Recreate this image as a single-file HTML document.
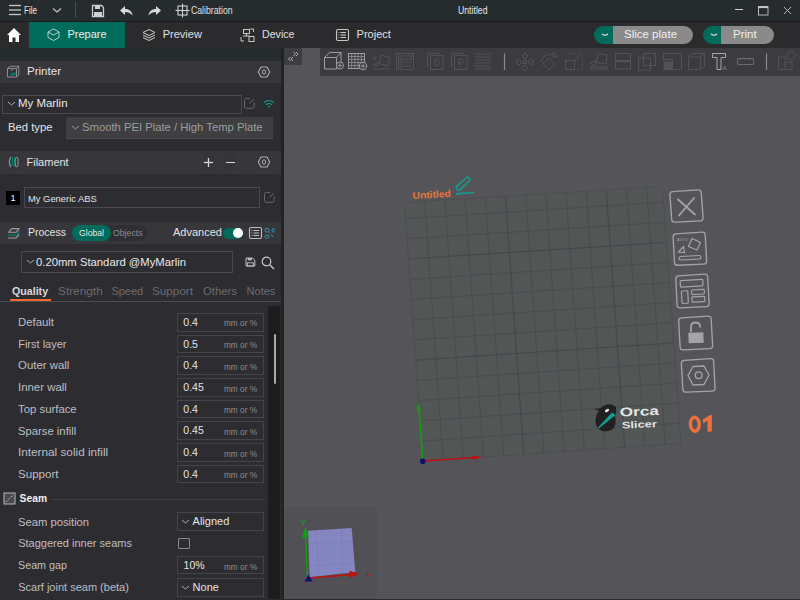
<!DOCTYPE html>
<html><head><meta charset="utf-8"><style>
html,body{margin:0;padding:0;}
body{width:800px;height:600px;overflow:hidden;background:#2d2c31;position:relative;font-family:"Liberation Sans",sans-serif;}
div,svg{position:absolute;}
.t{white-space:nowrap;}
</style></head><body>
<div style="left:0px;top:0px;width:800px;height:21px;background:#262b2d;"></div>
<div style="left:0px;top:21px;width:800px;height:1px;background:#1a1c1e;"></div>
<svg style="left:8px;top:3px;" width="14" height="14" viewBox="0 0 14 14"><g stroke="#c8c8c8" stroke-width="1.3"><line x1="1" y1="2.5" x2="13" y2="2.5"/><line x1="1" y1="7" x2="13" y2="7"/><line x1="1" y1="11.5" x2="13" y2="11.5"/></g></svg>
<div class="t" style="left:24.00px;top:5.54px;font-size:10px;line-height:10px;color:#e8e8e8;transform:scaleX(0.807);transform-origin:0 0;">File</div>
<svg style="left:52px;top:6px;" width="10" height="8" viewBox="0 0 10 8"><polyline points="1,2.5 5,6 9,2.5" fill="none" stroke="#c8c8c8" stroke-width="1.1"/></svg>
<div style="left:75px;top:2px;width:1px;height:16px;background:#4a4e50;"></div>
<svg style="left:91px;top:4px;" width="14" height="14" viewBox="0 0 14 14"><path d="M1.5 1.5h9l2 2v9h-11z" fill="none" stroke="#d0d0d0" stroke-width="1.3"/><rect x="4" y="1.5" width="5" height="3.5" fill="#d0d0d0"/><rect x="3" y="8" width="8" height="4.5" fill="#d0d0d0"/></svg>
<svg style="left:119px;top:5px;" width="15" height="12" viewBox="0 0 15 12"><path d="M6 1 L1 5.5 L6 10 V7 C9 7 11.5 8 13.5 10.5 C13 6.5 10.5 4 6 4 Z" fill="#d8d8d8"/></svg>
<svg style="left:147px;top:5px;" width="15" height="12" viewBox="0 0 15 12"><path d="M9 1 L14 5.5 L9 10 V7 C6 7 3.5 8 1.5 10.5 C2 6.5 4.5 4 9 4 Z" fill="#d8d8d8"/></svg>
<svg style="left:175px;top:3px;" width="15" height="15" viewBox="0 0 15 15"><g fill="none" stroke="#d0d0d0" stroke-width="1.1"><rect x="3" y="3" width="9" height="9"/><line x1="7.5" y1="0.5" x2="7.5" y2="14.5"/><line x1="0.5" y1="7.5" x2="14.5" y2="7.5"/></g></svg>
<div class="t" style="left:191.00px;top:5.54px;font-size:10px;line-height:10px;color:#e0e0e0;transform:scaleX(0.870);transform-origin:0 0;">Calibration</div>
<div class="t" style="left:457.50px;top:5.54px;font-size:10px;line-height:10px;color:#e8e8e8;transform:scaleX(0.870);transform-origin:0 0;">Untitled</div>
<div style="left:735px;top:9px;width:8px;height:1px;background:#d0d0d0;"></div>
<svg style="left:757px;top:5px;" width="12" height="11" viewBox="0 0 12 11"><rect x="1.5" y="1.5" width="9.5" height="8.5" fill="none" stroke="#c8c8c8" stroke-width="0.9"/><rect x="1.5" y="1.5" width="9.5" height="1.6" fill="#c8c8c8"/></svg>
<svg style="left:783px;top:6px;" width="10" height="10" viewBox="0 0 10 10"><g stroke="#c8c8c8" stroke-width="0.9"><line x1="1" y1="1" x2="8" y2="8"/><line x1="8" y1="1" x2="1" y2="8"/></g></svg>
<div style="left:0px;top:22px;width:800px;height:26px;background:#2b2b2e;"></div>
<div style="left:29px;top:22px;width:95.7px;height:26px;background:#006b5a;"></div>
<svg style="left:6px;top:27px;" width="16" height="16" viewBox="0 0 16 16"><path d="M8 1 L15 8 H13 V15 H9.5 V10.5 H6.5 V15 H3 V8 H1 Z" fill="#ffffff"/></svg>
<svg style="left:47px;top:28px;" width="13" height="13" viewBox="0 0 13 13"><g fill="none" stroke="#c8dcd8" stroke-width="0.9"><path d="M6.5 1 L12 4 V9.5 L6.5 12.5 L1 9.5 V4 Z"/><path d="M1 4 L6.5 7 L12 4"/></g></svg>
<div class="t" style="left:67.50px;top:29.49px;font-size:11px;line-height:11px;color:#e8f0ee;">Prepare</div>
<svg style="left:142px;top:28px;" width="14" height="14" viewBox="0 0 14 14"><g fill="none" stroke="#d0d0d0" stroke-width="1"><path d="M7 1.5 L13 4.5 L7 7.5 L1 4.5 Z"/><path d="M1 7 L7 10 L13 7"/><path d="M1 9.5 L7 12.5 L13 9.5"/></g></svg>
<div class="t" style="left:162.75px;top:28.99px;font-size:11px;line-height:11px;color:#e0e0e0;">Preview</div>
<svg style="left:240px;top:28px;" width="15" height="14" viewBox="0 0 15 14"><g fill="none" stroke="#c8c8c8" stroke-width="1"><rect x="3.5" y="1.5" width="6" height="4"/><line x1="6.5" y1="5.5" x2="6.5" y2="8"/><line x1="3" y1="8" x2="10" y2="8"/><path d="M1 9 V13 H4"/><path d="M10 1 H13.5 V4"/><rect x="9" y="8.5" width="5" height="5"/></g></svg>
<div class="t" style="left:262.00px;top:28.99px;font-size:11px;line-height:11px;color:#e0e0e0;transform:scaleX(0.967);transform-origin:0 0;">Device</div>
<svg style="left:335px;top:28px;" width="15" height="14" viewBox="0 0 15 14"><g fill="none" stroke="#c8c8c8" stroke-width="1.1"><rect x="1.5" y="1.5" width="12" height="11" rx="1.5"/><line x1="5.5" y1="4.5" x2="11" y2="4.5"/><line x1="5.5" y1="7" x2="11" y2="7"/><line x1="5.5" y1="9.5" x2="11" y2="9.5"/><line x1="3.5" y1="4.5" x2="4.3" y2="4.5"/><line x1="3.5" y1="7" x2="4.3" y2="7"/><line x1="3.5" y1="9.5" x2="4.3" y2="9.5"/></g></svg>
<div class="t" style="left:356.60px;top:28.99px;font-size:11px;line-height:11px;color:#e0e0e0;">Project</div>
<div style="left:594px;top:26px;width:30px;height:17.5px;background:#006b5a;border-radius:9px 0 0 9px;"></div>
<div style="left:612.5px;top:26px;width:80px;height:17.5px;background:#8a8a8a;border-radius:0 9px 9px 0;"></div>
<svg style="left:599px;top:31px;" width="12" height="8" viewBox="0 0 12 8"><path d="M3 3 Q6 5.5 9 3" fill="none" stroke="#e0e0e0" stroke-width="1.1"/></svg>
<div class="t" style="left:624.00px;top:28.57px;font-size:11.5px;line-height:11.5px;color:#f0f0f0;">Slice plate</div>
<div style="left:703px;top:26px;width:30px;height:17.5px;background:#006b5a;border-radius:9px 0 0 9px;"></div>
<div style="left:721px;top:26px;width:53px;height:17.5px;background:#8a8a8a;border-radius:0 9px 9px 0;"></div>
<svg style="left:708px;top:31px;" width="12" height="8" viewBox="0 0 12 8"><path d="M3 3 Q6 5.5 9 3" fill="none" stroke="#e0e0e0" stroke-width="1.1"/></svg>
<div class="t" style="left:733.00px;top:28.57px;font-size:11.5px;line-height:11.5px;color:#f0f0f0;">Print</div>
<div style="left:0px;top:47.5px;width:800px;height:1px;background:#232325;"></div>
<div style="left:0px;top:48px;width:281px;height:552px;background:#2d2c31;"></div>
<div style="left:0px;top:48px;width:281px;height:13px;background:#262b2d;"></div>
<div style="left:280.5px;top:48px;width:3.5px;height:552px;background:#1f2425;"></div>
<div style="left:0px;top:61px;width:281px;height:22px;background:#36363b;"></div>
<svg style="left:4px;top:62px;" width="20" height="20" viewBox="0 0 20 20"><rect x="3.3" y="2" width="12" height="16" fill="#34353b"/><g fill="none" stroke="#8e8e92" stroke-width="1" stroke-linejoin="round"><path d="M3.5 6.5 H12.5 V15 H3.5 Z"/><path d="M3.5 6.5 L5.8 4.3 H14.8 V13 L12.5 15"/><path d="M12.5 6.5 L14.8 4.3"/><path d="M8 6.5 V9"/></g><path d="M5.2 13.2 Q8 10.3 11.5 10.2 V13.2 Z" fill="#00806a"/></svg>
<div class="t" style="left:26.50px;top:65.99px;font-size:11px;line-height:11px;color:#e4e4e4;transform:scaleX(1.049);transform-origin:0 0;">Printer</div>
<div style="left:258.5px;top:64px;width:11px;height:15.5px;background:#34353b;"></div>
<svg style="left:256px;top:63.7px;" width="16" height="16" viewBox="0 0 16 16"><path d="M2.3 8 L5 3 H11 L13.7 8 L11 13 H5 Z" fill="none" stroke="#b0b0b0" stroke-width="1.1" stroke-linejoin="round"/><ellipse cx="8" cy="8" rx="1.7" ry="2.2" fill="none" stroke="#b0b0b0" stroke-width="1"/></svg>
<div style="left:2px;top:95px;width:239.5px;height:18.5px;border:1px solid #48484e;box-sizing:border-box;"></div>
<svg style="left:7px;top:100px;" width="9" height="7" viewBox="0 0 9 7"><polyline points="1,2 4.5,5 8,2" fill="none" stroke="#b0b0b0" stroke-width="1"/></svg>
<div class="t" style="left:17.50px;top:98.39px;font-size:11px;line-height:11px;color:#e8e8e8;transform:scaleX(1.038);transform-origin:0 0;">My Marlin</div>
<svg style="left:243px;top:96px;" width="14" height="14" viewBox="0 0 14 14"><path d="M11.2 6.5 V10.5 Q11.2 12.3 9.4 12.3 H3.3 Q1.5 12.3 1.5 10.5 V4.3 Q1.5 2.5 3.3 2.5 H7" fill="none" stroke="#67676b" stroke-width="1"/><line x1="6.5" y1="7.3" x2="11" y2="3" stroke="#67676b" stroke-width="1"/></svg>
<svg style="left:263px;top:98px;" width="12" height="10" viewBox="0 0 12 10"><g fill="none" stroke="#0e9c87" stroke-width="1.1" stroke-linecap="round"><path d="M1.2 4.3 Q5.8 0.6 10.5 4.3"/><path d="M3.2 6.5 Q5.8 4.4 8.5 6.5"/></g><circle cx="5.8" cy="8.6" r="0.9" fill="#0e9c87"/></svg>
<div class="t" style="left:7.50px;top:121.69px;font-size:11px;line-height:11px;color:#e4e4e4;transform:scaleX(1.025);transform-origin:0 0;">Bed type</div>
<div style="left:66.3px;top:117.2px;width:207.2px;height:21.5px;background:#3f3f41;"></div>
<div style="left:66.3px;top:137.7px;width:207.2px;height:1px;background:#4b4b50;"></div>
<svg style="left:71px;top:124px;" width="10" height="7" viewBox="0 0 10 7"><polyline points="1,2 4.5,5 8,2" fill="none" stroke="#9a9a9a" stroke-width="1"/></svg>
<div class="t" style="left:81.50px;top:121.69px;font-size:11px;line-height:11px;color:#9c9ca0;transform:scaleX(1.023);transform-origin:0 0;">Smooth PEI Plate / High Temp Plate</div>
<div style="left:0px;top:151px;width:281px;height:23px;background:#36363b;"></div>
<svg style="left:4px;top:152px;" width="20" height="20" viewBox="0 0 20 20"><rect x="3.3" y="2" width="11.7" height="16" fill="#34353b"/><g fill="none" stroke-linecap="round"><path d="M6.6 5.2 Q4.2 10 6.6 14.8" stroke="#8e8e92" stroke-width="1.3"/><line x1="8.4" y1="5.5" x2="8.4" y2="13.4" stroke="#00806a" stroke-width="1.1"/><line x1="10.4" y1="5.5" x2="10.4" y2="13.4" stroke="#00806a" stroke-width="1.1"/><ellipse cx="12.6" cy="10" rx="1.5" ry="4.7" stroke="#8e8e92" stroke-width="1.1"/></g></svg>
<div class="t" style="left:26.50px;top:156.69px;font-size:11px;line-height:11px;color:#e4e4e4;">Filament</div>
<div style="left:203px;top:152px;width:11px;height:19px;background:#34353b;"></div>
<div style="left:225.4px;top:152px;width:11px;height:19px;background:#34353b;"></div>
<svg style="left:203px;top:157px;" width="11" height="11" viewBox="0 0 11 11"><g stroke="#d8d8d8" stroke-width="1.3"><line x1="5.5" y1="1" x2="5.5" y2="10"/><line x1="1" y1="5.5" x2="10" y2="5.5"/></g></svg>
<div style="left:226px;top:161.5px;width:9px;height:1.3px;background:#d8d8d8;"></div>
<div style="left:258.5px;top:154.5px;width:11px;height:15.5px;background:#34353b;"></div>
<svg style="left:256px;top:154.2px;" width="16" height="16" viewBox="0 0 16 16"><path d="M2.3 8 L5 3 H11 L13.7 8 L11 13 H5 Z" fill="none" stroke="#b0b0b0" stroke-width="1.1" stroke-linejoin="round"/><ellipse cx="8" cy="8" rx="1.7" ry="2.2" fill="none" stroke="#b0b0b0" stroke-width="1"/></svg>
<div style="left:6px;top:191px;width:14px;height:14px;background:#000000;"></div>
<div class="t" style="left:10.50px;top:194.38px;font-size:9px;line-height:9px;color:#ffffff;">1</div>
<div style="left:24px;top:187.3px;width:236.3px;height:21.2px;border:1px solid #48484e;box-sizing:border-box;"></div>
<div class="t" style="left:27.80px;top:193.79px;font-size:9.7px;line-height:9.7px;color:#e4e4e4;transform:scaleX(0.967);transform-origin:0 0;">My Generic ABS</div>
<svg style="left:262.5px;top:190px;" width="14" height="14" viewBox="0 0 14 14"><path d="M11.2 6.5 V10.5 Q11.2 12.3 9.4 12.3 H3.3 Q1.5 12.3 1.5 10.5 V4.3 Q1.5 2.5 3.3 2.5 H7" fill="none" stroke="#67676b" stroke-width="1"/><line x1="6.5" y1="7.3" x2="11" y2="3" stroke="#67676b" stroke-width="1"/></svg>
<div style="left:0px;top:221.6px;width:281px;height:22.6px;background:#36363b;"></div>
<svg style="left:4px;top:224px;" width="20" height="18" viewBox="0 0 20 18"><g fill="none" stroke-linejoin="round" stroke-linecap="round"><path d="M4.6 8.3 L7.8 4.6 H15 L12.2 8.3 Z" stroke="#a0a0a2" stroke-width="1.1"/><path d="M4.6 11.2 H12.6 L15.4 7.6" stroke="#00806a" stroke-width="1.3"/><path d="M4.6 14 H12 L15 10.8" stroke="#a0a0a2" stroke-width="1.1"/></g></svg>
<div class="t" style="left:27.50px;top:226.99px;font-size:11px;line-height:11px;color:#e4e4e4;transform:scaleX(0.956);transform-origin:0 0;">Process</div>
<div style="left:72px;top:225px;width:75px;height:15.6px;background:#2f2f33;border-radius:8px;"></div>
<div style="left:72px;top:225px;width:38.5px;height:15.6px;background:#006b5a;border-radius:8px;"></div>
<div class="t" style="left:79.00px;top:228.78px;font-size:9px;line-height:9px;color:#e8e8e8;transform:scaleX(0.961);transform-origin:0 0;">Global</div>
<div class="t" style="left:112.50px;top:228.78px;font-size:9px;line-height:9px;color:#8a8a8e;transform:scaleX(0.967);transform-origin:0 0;">Objects</div>
<div class="t" style="left:173.00px;top:227.29px;font-size:11px;line-height:11px;color:#e4e4e4;">Advanced</div>
<div style="left:223.4px;top:227.7px;width:19.6px;height:11.3px;background:#006b5a;border-radius:6px;"></div>
<div style="left:232.5px;top:228.2px;width:10.3px;height:10.3px;background:#ffffff;border-radius:50%;"></div>
<svg style="left:248px;top:226px;" width="15" height="14" viewBox="0 0 15 14"><rect x="1.5" y="1.5" width="12" height="11" rx="1.5" fill="none" stroke="#c0c0c0" stroke-width="1.1"/><g stroke="#c0c0c0" stroke-width="1"><line x1="5.5" y1="4.5" x2="11" y2="4.5"/><line x1="5.5" y1="7" x2="11" y2="7"/><line x1="5.5" y1="9.5" x2="11" y2="9.5"/><line x1="3.5" y1="4.5" x2="4.3" y2="4.5"/><line x1="3.5" y1="7" x2="4.3" y2="7"/><line x1="3.5" y1="9.5" x2="4.3" y2="9.5"/></g></svg>
<div style="left:264px;top:225px;width:11.5px;height:16px;background:#34363c;"></div>
<svg style="left:263px;top:226px;" width="13" height="14" viewBox="0 0 13 14"><g fill="none" stroke="#3d8fa8" stroke-width="1"><ellipse cx="4" cy="4.2" rx="2.2" ry="1.9"/><ellipse cx="4" cy="10.6" rx="2.2" ry="1.5"/><line x1="5.8" y1="5.8" x2="7" y2="7"/><line x1="8" y1="8.2" x2="10" y2="11"/><ellipse cx="10.2" cy="4.3" rx="1.2" ry="1.8"/></g></svg>
<div style="left:21px;top:251.2px;width:212px;height:21.5px;border:1px solid #48484e;box-sizing:border-box;"></div>
<svg style="left:26px;top:258px;" width="10" height="7" viewBox="0 0 10 7"><polyline points="1,2 4.5,5 8,2" fill="none" stroke="#b0b0b0" stroke-width="1"/></svg>
<div class="t" style="left:36.00px;top:256.69px;font-size:11px;line-height:11px;color:#e8e8e8;transform:scaleX(1.026);transform-origin:0 0;">0.20mm Standard @MyMarlin</div>
<svg style="left:245px;top:257px;" width="11" height="10" viewBox="0 0 11 10"><path d="M1 1 H7.5 L9.8 3.3 V9 H1 Z" fill="none" stroke="#c0c0c0" stroke-width="1"/><rect x="2.8" y="1" width="4" height="2.3" fill="#c0c0c0"/><rect x="2.5" y="5.8" width="5.8" height="3.2" fill="none" stroke="#c0c0c0" stroke-width="0.9"/></svg>
<svg style="left:261px;top:256px;" width="14" height="14" viewBox="0 0 14 14"><circle cx="5.5" cy="5.5" r="4.3" fill="none" stroke="#c8c8c8" stroke-width="1.2"/><line x1="8.7" y1="8.7" x2="13" y2="13" stroke="#c8c8c8" stroke-width="1.3"/></svg>
<div class="t" style="left:11.90px;top:285.94px;font-size:10.7px;line-height:10.7px;color:#d8d8dc;font-weight:bold;">Quality</div>
<div style="left:9.6px;top:299px;width:41.4px;height:2px;background:#f2692f;"></div>
<div class="t" style="left:57.80px;top:285.69px;font-size:11px;line-height:11px;color:#6c6c70;transform:scaleX(1.075);transform-origin:0 0;">Strength</div>
<div class="t" style="left:111.40px;top:285.69px;font-size:11px;line-height:11px;color:#6c6c70;">Speed</div>
<div class="t" style="left:151.60px;top:285.69px;font-size:11px;line-height:11px;color:#6c6c70;transform:scaleX(1.062);transform-origin:0 0;">Support</div>
<div class="t" style="left:202.80px;top:285.69px;font-size:11px;line-height:11px;color:#6c6c70;transform:scaleX(1.024);transform-origin:0 0;">Others</div>
<div class="t" style="left:246.60px;top:285.69px;font-size:11px;line-height:11px;color:#6c6c70;">Notes</div>
<div style="left:0px;top:301px;width:280.5px;height:1px;background:#4c4c52;"></div>
<div style="left:268.2px;top:306px;width:12.3px;height:294px;background:#1c1d1c;"></div>
<div style="left:273.8px;top:333.5px;width:2.3px;height:50.5px;background:#a8a8a8;border-radius:1px;"></div>
<div class="t" style="left:18.20px;top:317.09px;font-size:11px;line-height:11px;color:#bebec2;transform:scaleX(1.033);transform-origin:0 0;">Default</div>
<div style="left:177.3px;top:312.8px;width:86.7px;height:18.8px;border:1px solid #444449;box-sizing:border-box;"></div>
<div class="t" style="left:183.30px;top:316.91px;font-size:10.5px;line-height:10.5px;color:#e4e4e6;">0.4</div>
<div class="t" style="left:223.90px;top:319.47px;font-size:8.3px;line-height:8.3px;color:#8c8c90;">mm or %</div>
<div class="t" style="left:18.20px;top:338.79px;font-size:11px;line-height:11px;color:#bebec2;">First layer</div>
<div style="left:177.3px;top:334.5px;width:86.7px;height:18.8px;border:1px solid #444449;box-sizing:border-box;"></div>
<div class="t" style="left:183.30px;top:338.61px;font-size:10.5px;line-height:10.5px;color:#e4e4e6;">0.5</div>
<div class="t" style="left:223.90px;top:341.17px;font-size:8.3px;line-height:8.3px;color:#8c8c90;">mm or %</div>
<div class="t" style="left:18.20px;top:360.49px;font-size:11px;line-height:11px;color:#bebec2;transform:scaleX(1.038);transform-origin:0 0;">Outer wall</div>
<div style="left:177.3px;top:356.2px;width:86.7px;height:18.8px;border:1px solid #444449;box-sizing:border-box;"></div>
<div class="t" style="left:183.30px;top:360.31px;font-size:10.5px;line-height:10.5px;color:#e4e4e6;">0.4</div>
<div class="t" style="left:223.90px;top:362.87px;font-size:8.3px;line-height:8.3px;color:#8c8c90;">mm or %</div>
<div class="t" style="left:18.20px;top:382.19px;font-size:11px;line-height:11px;color:#bebec2;transform:scaleX(1.037);transform-origin:0 0;">Inner wall</div>
<div style="left:177.3px;top:377.9px;width:86.7px;height:18.8px;border:1px solid #444449;box-sizing:border-box;"></div>
<div class="t" style="left:183.30px;top:382.01px;font-size:10.5px;line-height:10.5px;color:#e4e4e6;">0.45</div>
<div class="t" style="left:223.90px;top:384.57px;font-size:8.3px;line-height:8.3px;color:#8c8c90;">mm or %</div>
<div class="t" style="left:18.20px;top:403.89px;font-size:11px;line-height:11px;color:#bebec2;transform:scaleX(1.032);transform-origin:0 0;">Top surface</div>
<div style="left:177.3px;top:399.6px;width:86.7px;height:18.8px;border:1px solid #444449;box-sizing:border-box;"></div>
<div class="t" style="left:183.30px;top:403.71px;font-size:10.5px;line-height:10.5px;color:#e4e4e6;">0.4</div>
<div class="t" style="left:223.90px;top:406.27px;font-size:8.3px;line-height:8.3px;color:#8c8c90;">mm or %</div>
<div class="t" style="left:18.20px;top:425.59px;font-size:11px;line-height:11px;color:#bebec2;transform:scaleX(1.025);transform-origin:0 0;">Sparse infill</div>
<div style="left:177.3px;top:421.3px;width:86.7px;height:18.8px;border:1px solid #444449;box-sizing:border-box;"></div>
<div class="t" style="left:183.30px;top:425.41px;font-size:10.5px;line-height:10.5px;color:#e4e4e6;">0.45</div>
<div class="t" style="left:223.90px;top:427.97px;font-size:8.3px;line-height:8.3px;color:#8c8c90;">mm or %</div>
<div class="t" style="left:18.20px;top:447.29px;font-size:11px;line-height:11px;color:#bebec2;transform:scaleX(1.069);transform-origin:0 0;">Internal solid infill</div>
<div style="left:177.3px;top:443.0px;width:86.7px;height:18.8px;border:1px solid #444449;box-sizing:border-box;"></div>
<div class="t" style="left:183.30px;top:447.11px;font-size:10.5px;line-height:10.5px;color:#e4e4e6;">0.4</div>
<div class="t" style="left:223.90px;top:449.67px;font-size:8.3px;line-height:8.3px;color:#8c8c90;">mm or %</div>
<div class="t" style="left:18.20px;top:468.99px;font-size:11px;line-height:11px;color:#bebec2;transform:scaleX(1.051);transform-origin:0 0;">Support</div>
<div style="left:177.3px;top:464.70000000000005px;width:86.7px;height:18.8px;border:1px solid #444449;box-sizing:border-box;"></div>
<div class="t" style="left:183.30px;top:468.81px;font-size:10.5px;line-height:10.5px;color:#e4e4e6;">0.4</div>
<div class="t" style="left:223.90px;top:471.37px;font-size:8.3px;line-height:8.3px;color:#8c8c90;">mm or %</div>
<svg style="left:3px;top:492px;" width="13" height="13" viewBox="0 0 13 13"><rect x="1" y="1" width="11" height="11" fill="#4a4a4e" stroke="#b8b8b8" stroke-width="1"/><path d="M3 10 L10 3" stroke="#d0d0d0" stroke-width="1" stroke-dasharray="1.2 1.2"/></svg>
<div class="t" style="left:19.60px;top:493.68px;font-size:10.3px;line-height:10.3px;color:#f0f0f0;font-weight:bold;">Seam</div>
<div style="left:50.8px;top:498.8px;width:214px;height:1px;background:#3e3e43;"></div>
<div class="t" style="left:18.20px;top:516.69px;font-size:11px;line-height:11px;color:#bebec2;transform:scaleX(1.020);transform-origin:0 0;">Seam position</div>
<div class="t" style="left:18.20px;top:538.39px;font-size:11px;line-height:11px;color:#bebec2;">Staggered inner seams</div>
<div class="t" style="left:18.20px;top:560.09px;font-size:11px;line-height:11px;color:#bebec2;transform:scaleX(0.977);transform-origin:0 0;">Seam gap</div>
<div class="t" style="left:18.20px;top:581.79px;font-size:11px;line-height:11px;color:#bebec2;">Scarf joint seam (beta)</div>
<div style="left:177.4px;top:512px;width:86.2px;height:18.6px;border:1px solid #444449;box-sizing:border-box;"></div>
<svg style="left:181px;top:518px;" width="10" height="7" viewBox="0 0 10 7"><polyline points="1,2 4.5,5 8,2" fill="none" stroke="#b0b0b0" stroke-width="1"/></svg>
<div class="t" style="left:192.60px;top:516.29px;font-size:11px;line-height:11px;color:#e4e4e6;">Aligned</div>
<div style="left:178px;top:538px;width:11.6px;height:11.4px;border:1px solid #8a8a8e;box-sizing:border-box;border-radius:1px;"></div>
<div style="left:177.4px;top:556px;width:86.2px;height:18.4px;border:1px solid #444449;box-sizing:border-box;"></div>
<div class="t" style="left:183.60px;top:560.11px;font-size:10.5px;line-height:10.5px;color:#e4e4e6;">10%</div>
<div class="t" style="left:223.90px;top:562.67px;font-size:8.3px;line-height:8.3px;color:#8c8c90;">mm or %</div>
<div style="left:177.4px;top:577.6px;width:86.2px;height:19px;border:1px solid #444449;box-sizing:border-box;"></div>
<svg style="left:181px;top:584px;" width="10" height="7" viewBox="0 0 10 7"><polyline points="1,2 4.5,5 8,2" fill="none" stroke="#b0b0b0" stroke-width="1"/></svg>
<div class="t" style="left:192.60px;top:581.69px;font-size:11px;line-height:11px;color:#e4e4e6;">None</div>
<div style="left:284px;top:48px;width:516px;height:552px;background:#555459;"></div>
<div style="left:284px;top:48px;width:18px;height:17px;background:#3d3d42;"></div>
<svg style="left:286px;top:50px;" width="14" height="12" viewBox="0 0 14 12"><g fill="none" stroke="#b8b8b8" stroke-width="0.9"><path d="M4.5 7 L2.5 9 L4.5 11"/><path d="M7 7 L5 9 L7 11"/><path d="M7.5 2 L9.5 4 L7.5 6"/><path d="M10 2 L12 4 L10 6"/></g></svg>
<div style="left:320.2px;top:47.7px;width:479.8px;height:28px;background:#3b3b40;"></div>
<div style="left:0px;top:598.5px;width:800px;height:1.5px;background:#2a2a2d;"></div>
<svg style="left:0;top:0" width="800" height="600" viewBox="0 0 800 600"><defs><clipPath id="pc"><path d="M422.8,461.3 L405.2,211.6 Q404.6,202.6 413.6,202.0 L653.5,186.9 Q662.5,186.3 663.1,195.2 L681.0,443.3 Z"/></clipPath></defs><path d="M422.8,461.3 L405.2,211.6 Q404.6,202.6 413.6,202.0 L653.5,186.9 Q662.5,186.3 663.1,195.2 L681.0,443.3 Z" fill="#525654"/><g clip-path="url(#pc)"><line x1="443.0" y1="459.9" x2="424.8" y2="201.3" stroke="#4c4a54" stroke-width="1.0"/><line x1="421.4" y1="441.1" x2="679.6" y2="423.2" stroke="#4c4a54" stroke-width="1.0"/><line x1="463.2" y1="458.5" x2="444.9" y2="200.1" stroke="#4c4a54" stroke-width="1.0"/><line x1="420.0" y1="420.8" x2="678.1" y2="403.1" stroke="#4c4a54" stroke-width="1.0"/><line x1="483.4" y1="457.1" x2="465.1" y2="198.8" stroke="#4c4a54" stroke-width="1.0"/><line x1="418.5" y1="400.6" x2="676.7" y2="383.0" stroke="#4c4a54" stroke-width="1.0"/><line x1="503.6" y1="455.7" x2="485.3" y2="197.5" stroke="#4c4a54" stroke-width="1.0"/><line x1="417.1" y1="380.4" x2="675.2" y2="362.9" stroke="#4c4a54" stroke-width="1.0"/><line x1="523.7" y1="454.3" x2="505.4" y2="196.2" stroke="#484650" stroke-width="1.2"/><line x1="415.7" y1="360.2" x2="673.8" y2="342.8" stroke="#484650" stroke-width="1.2"/><line x1="543.9" y1="452.9" x2="525.6" y2="195.0" stroke="#4c4a54" stroke-width="1.0"/><line x1="414.3" y1="339.9" x2="672.3" y2="322.7" stroke="#4c4a54" stroke-width="1.0"/><line x1="564.1" y1="451.4" x2="545.7" y2="193.7" stroke="#4c4a54" stroke-width="1.0"/><line x1="412.8" y1="319.7" x2="670.9" y2="302.6" stroke="#4c4a54" stroke-width="1.0"/><line x1="584.3" y1="450.0" x2="565.9" y2="192.4" stroke="#4c4a54" stroke-width="1.0"/><line x1="411.4" y1="299.5" x2="669.4" y2="282.5" stroke="#4c4a54" stroke-width="1.0"/><line x1="604.5" y1="448.6" x2="586.1" y2="191.1" stroke="#4c4a54" stroke-width="1.0"/><line x1="410.0" y1="279.3" x2="668.0" y2="262.5" stroke="#4c4a54" stroke-width="1.0"/><line x1="624.7" y1="447.2" x2="606.2" y2="189.9" stroke="#484650" stroke-width="1.2"/><line x1="408.6" y1="259.0" x2="666.5" y2="242.4" stroke="#484650" stroke-width="1.2"/><line x1="644.9" y1="445.8" x2="626.4" y2="188.6" stroke="#4c4a54" stroke-width="1.0"/><line x1="407.1" y1="238.8" x2="665.1" y2="222.3" stroke="#4c4a54" stroke-width="1.0"/><line x1="665.1" y1="444.4" x2="646.6" y2="187.3" stroke="#4c4a54" stroke-width="1.0"/><line x1="405.7" y1="218.6" x2="663.6" y2="202.2" stroke="#4c4a54" stroke-width="1.0"/></g><path d="M422.8,461.3 L405.2,211.6 Q404.6,202.6 413.6,202.0 L653.5,186.9 Q662.5,186.3 663.1,195.2 L681.0,443.3 Z" fill="none" stroke="#4d4e54" stroke-width="1"/><line x1="422.8" y1="461" x2="419" y2="408" stroke="#10a010" stroke-width="1.6"/><path d="M418.4,402.8 L421,410.6 L416.6,410.9 Z" fill="#10a010"/><line x1="423" y1="461" x2="475" y2="457.5" stroke="#c01010" stroke-width="1.6"/><path d="M482.2,457 L472.8,459.8 L472.6,455.5 Z" fill="#c01010"/><circle cx="422.8" cy="461.3" r="2.8" fill="#101070"/><text x="412.8" y="199" font-family="Liberation Sans" font-weight="bold" font-size="9.6" fill="#e8783c" transform="rotate(-3.5 412.8 199)" textLength="38.2" lengthAdjust="spacingAndGlyphs">Untitled</text><rect x="-8.3" y="-2.3" width="16.6" height="4.6" rx="2.3" fill="none" stroke="#139d8c" stroke-width="1.5" transform="translate(463.2 183.6) rotate(-42)"/><line x1="456" y1="193.9" x2="474" y2="192.5" stroke="#139d8c" stroke-width="1.6"/><path d="M600,408.5 Q606,403.5 612,404.5 L616,407 Q617,412 615,416 Q617,424 613,429 Q607,433 600,430 Q595,427 595.5,420 Q596,414 599,411 L594.5,409 Z" fill="#202022"/><ellipse cx="607" cy="410.5" rx="2.3" ry="1.3" fill="#e8e8e8" transform="rotate(-30 607 410.5)"/><path d="M612,412.5 L615.5,415 L598.5,428.8 L597.8,427.8 Z" fill="#12a090"/><text x="620" y="416.5" font-family="Liberation Sans" font-weight="bold" font-size="12.5" fill="#e4e4e4" textLength="39" lengthAdjust="spacingAndGlyphs" transform="rotate(-2.5 620 416.5)">Orca</text><text x="622" y="428.5" font-family="Liberation Sans" font-weight="bold" font-size="9.5" fill="#e4e4e4" textLength="35" lengthAdjust="spacingAndGlyphs" transform="rotate(-2.5 622 428.5)">Slicer</text><ellipse cx="694.8" cy="424.2" rx="4.4" ry="7.0" fill="none" stroke="#ee7040" stroke-width="3.4" transform="rotate(-4 694.8 424.2)"/><path d="M702.4,420 L709.8,415 L711.9,415.2 L711.8,431.4 L707.6,431.7 L707.4,420.6 L703.6,423.6 Z" fill="#ee7040"/><path d="M669.92,194.89 Q669.70,191.90 672.69,191.69 L698.01,189.91 Q701.00,189.70 701.22,192.69 L703.08,217.71 Q703.30,220.70 700.30,220.84 L674.90,222.06 Q671.90,222.20 671.68,219.21 Z" fill="none" stroke="#a4a4a8" stroke-width="1.35"/><path d="M673.15,237.00 Q673.00,234.00 675.99,233.81 L702.01,232.19 Q705.00,232.00 705.17,235.00 L706.63,261.00 Q706.80,264.00 703.80,264.13 L677.60,265.27 Q674.60,265.40 674.45,262.40 Z" fill="none" stroke="#a4a4a8" stroke-width="1.35"/><path d="M675.84,279.00 Q675.70,276.00 678.69,275.81 L704.51,274.19 Q707.50,274.00 707.67,277.00 L709.13,303.50 Q709.30,306.50 706.30,306.64 L680.20,307.86 Q677.20,308.00 677.06,305.00 Z" fill="none" stroke="#a4a4a8" stroke-width="1.35"/><path d="M678.67,321.00 Q678.50,318.00 681.49,317.82 L708.01,316.18 Q711.00,316.00 711.17,319.00 L712.63,345.50 Q712.80,348.50 709.80,348.64 L683.30,349.86 Q680.30,350.00 680.13,347.00 Z" fill="none" stroke="#a4a4a8" stroke-width="1.35"/><path d="M681.37,363.50 Q681.20,360.50 684.19,360.31 L710.51,358.69 Q713.50,358.50 713.66,361.50 L715.04,388.00 Q715.20,391.00 712.20,391.12 L686.00,392.18 Q683.00,392.30 682.83,389.30 Z" fill="none" stroke="#a4a4a8" stroke-width="1.35"/><g stroke="#a4a4a8" stroke-width="1.8"><line x1="677.5" y1="199" x2="695.5" y2="215"/><line x1="694.5" y1="197.5" x2="678.5" y2="216"/></g><g fill="none" stroke="#a4a4a8" stroke-width="1.2"><path d="M692,238.5 L700.5,242.5 L697,250 L688.5,246.5 Z"/><rect x="679" y="256" width="22" height="3.5" rx="1.7" transform="rotate(-3 690 258)"/><path d="M678.5,252 L683.5,246.5 L684.5,252.5 Z"/></g><text x="677" y="240.5" font-family="Liberation Sans" font-size="4" fill="#a4a4a8">AUTO</text><g fill="none" stroke="#a4a4a8" stroke-width="1.2" transform="rotate(-3 692 291)"><rect x="680.7" y="280" width="22.6" height="6.5" rx="0.8"/><rect x="681.4" y="290.5" width="6.3" height="12.5" rx="0.8"/><rect x="691.6" y="290" width="12.7" height="4.6" rx="0.8"/><rect x="691.6" y="297" width="12.7" height="5.2" rx="0.8"/></g><path d="M688.5,332.5 H703.5 V343 H688.5 Z" fill="#a4a4a8" transform="rotate(-2 696 338)"/><path d="M691,332 V327 Q691,322.5 695.5,322.5 Q700,322.5 700,326.5 V327.5" fill="none" stroke="#a4a4a8" stroke-width="1.8"/><path d="M688,375.5 L693,366.5 L704,366 L709,375 L704,384.5 L693,385 Z" fill="none" stroke="#a4a4a8" stroke-width="1.3" stroke-linejoin="round"/><circle cx="698.7" cy="375.3" r="3.4" fill="none" stroke="#a4a4a8" stroke-width="1.3"/><rect x="284" y="506.4" width="93" height="92.1" fill="#505055"/><path d="M308,530.8 L351.7,527.9 L355.2,571.9 L309.7,577.2 Z" fill="#8585c2"/><g stroke="#7b7bb4" stroke-width="0.6"><line x1="316.7" y1="530.3" x2="318.5" y2="576.3"/><line x1="341.2" y1="528.6" x2="343" y2="573.5"/><line x1="308.8" y1="544" x2="353" y2="541.3"/><line x1="309.3" y1="565.8" x2="354.5" y2="563.2"/></g><line x1="307.5" y1="577" x2="305.5" y2="536" stroke="#10a010" stroke-width="1.5"/><path d="M305.2,527 L309,537 L302,537.5 Z" fill="#10a010"/><line x1="310" y1="578" x2="352" y2="574.5" stroke="#c01010" stroke-width="1.5"/><path d="M359,574 L350,577.8 L349.5,570.5 Z" fill="#c01010"/><path d="M308.5,574.5 L312.5,581.5 L304.5,581.5 Z" fill="#101070"/><text x="301.5" y="524" font-family="Liberation Sans" font-size="7.5" fill="#10a010">y</text><text x="366.5" y="577" font-family="Liberation Sans" font-size="7.5" fill="#c01010">x</text></svg>
<svg style="left:0;top:0" width="800" height="600" viewBox="0 0 800 600"><g fill="none" stroke="#9e9ea1" stroke-width="1"><path d="M324.5,57.5 H336.5 V69 H324.5 Z"/><path d="M324.5,57.5 L329.5,52.5 H341 L336.5,57.5"/><path d="M341,52.5 V62"/></g><circle cx="340" cy="65.5" r="3.6" fill="#3b3b40" stroke="#9e9ea1" stroke-width="1"/><g stroke="#9e9ea1" stroke-width="0.9"><line x1="337.6" y1="65.5" x2="342.4" y2="65.5"/><line x1="340" y1="63.1" x2="340" y2="67.9"/></g><rect x="348.5" y="53.5" width="16" height="15" fill="none" stroke="#9e9ea1" stroke-width="1"/><line x1="351.7" y1="53.5" x2="351.7" y2="68.5" stroke="#9e9ea1" stroke-width="0.7"/><line x1="348.5" y1="56.5" x2="364.5" y2="56.5" stroke="#9e9ea1" stroke-width="0.7"/><line x1="354.9" y1="53.5" x2="354.9" y2="68.5" stroke="#9e9ea1" stroke-width="0.7"/><line x1="348.5" y1="59.5" x2="364.5" y2="59.5" stroke="#9e9ea1" stroke-width="0.7"/><line x1="358.1" y1="53.5" x2="358.1" y2="68.5" stroke="#9e9ea1" stroke-width="0.7"/><line x1="348.5" y1="62.5" x2="364.5" y2="62.5" stroke="#9e9ea1" stroke-width="0.7"/><line x1="361.3" y1="53.5" x2="361.3" y2="68.5" stroke="#9e9ea1" stroke-width="0.7"/><line x1="348.5" y1="65.5" x2="364.5" y2="65.5" stroke="#9e9ea1" stroke-width="0.7"/><circle cx="363" cy="66" r="3.8" fill="#3b3b40" stroke="#9e9ea1" stroke-width="1"/><g stroke="#9e9ea1" stroke-width="0.9"><line x1="360.5" y1="66" x2="365.5" y2="66"/><line x1="363" y1="63.5" x2="363" y2="68.5"/></g><g fill="none" stroke="#525257" stroke-width="1"><path d="M381,55 L390,57.5 L388,66 L379,63.5 Z"/><path d="M374,69 H390"/><path d="M373.5,65 L377,61.5 L378,66 Z"/><path d="M373,57 H377 M373,59 H376"/></g><g fill="none" stroke="#525257" stroke-width="1"><rect x="396.5" y="53.5" width="17" height="16"/><rect x="398.5" y="56" width="13" height="3"/><rect x="398.5" y="61" width="3" height="6.5"/><line x1="403" y1="62" x2="411" y2="62"/><line x1="403" y1="66" x2="411" y2="66"/></g><g fill="none" stroke="#525257" stroke-width="1"><path d="M427.5,67 V53.5 H439"/><rect x="430.5" y="55.5" width="12.5" height="14"/><ellipse cx="436.7" cy="62.5" rx="2.3" ry="3.5"/></g><g fill="none" stroke="#525257" stroke-width="1"><path d="M451.5,67 V53.5 H463"/><rect x="454.5" y="55.5" width="12.5" height="14"/><path d="M459,66 V59 H462 Q464,59 464,61 Q464,63 462,63 H459"/></g><g stroke="#525257" stroke-width="1"><line x1="475" y1="54" x2="491" y2="54"/><line x1="475" y1="57" x2="491" y2="57"/><line x1="475" y1="60" x2="491" y2="60"/><line x1="475" y1="63" x2="491" y2="63"/><line x1="475" y1="66" x2="491" y2="66"/><line x1="475" y1="69" x2="491" y2="69"/></g><line x1="504.5" y1="53.5" x2="504.5" y2="70" stroke="#8a8a8e" stroke-width="1.2"/><g fill="none" stroke="#525257" stroke-width="1"><path d="M525,53 L528,56 L525,59 L522,56 Z"/><path d="M525,65 L528,68 L525,71 L522,68 Z"/><path d="M519,59 L522,62 L519,65 L516,62 Z"/><path d="M531,59 L534,62 L531,65 L528,62 Z"/><rect x="523.5" y="60.5" width="3" height="3"/></g><g fill="none" stroke="#525257" stroke-width="1"><path d="M549,58 L555,64 L549,70 L543,64 Z"/><path d="M541,62 Q543,54 552,54.5"/><path d="M553,52 L558,57 L553,57 Z"/></g><g fill="none" stroke="#525257" stroke-width="1"><rect x="565.5" y="60.5" width="9" height="9"/><path d="M565.5,53.5 H582.5 V69.5 H576" stroke-dasharray="1.5 1.5"/><line x1="574" y1="61" x2="580" y2="55"/></g><g fill="none" stroke="#525257" stroke-width="1"><path d="M598,53.5 L607,55 L606,64 L596,62.5 Z"/><path d="M590,63 L596,61 L595,66 Z"/><rect x="591" y="67" width="16" height="2"/></g><g fill="none" stroke="#525257" stroke-width="1"><rect x="615.5" y="53.5" width="15" height="7"/><rect x="615.5" y="61.5" width="15" height="7.5"/></g><g fill="none" stroke="#525257" stroke-width="1"><rect x="643.5" y="53.5" width="12" height="12"/><rect x="638.5" y="58" width="12" height="12"/></g><g fill="none" stroke="#525257" stroke-width="1"><path d="M663.5,53.5 H681.5 V69.5 H672.5 V59.5 H663.5 Z"/><rect x="664" y="62" width="8" height="7.5" fill="#525257"/></g><g fill="none" stroke="#525257" stroke-width="1"><path d="M688.5,57 L692.5,53.5 H704.5 V66 L700.5,69.5 H688.5 Z"/><path d="M688.5,57 H700.5 V69.5 M700.5,57 L704.5,53.5"/></g><path d="M712.5,53.5 H725.5 V57.5 H721 V69.5 H717 V57.5 H712.5 Z" fill="none" stroke="#a8a8aa" stroke-width="1"/><text x="722.5" y="69.5" font-family="Liberation Sans" font-size="6" fill="#8e8e90">A</text><g fill="none" stroke="#6a6a6e" stroke-width="1"><rect x="737.5" y="58.5" width="16" height="6" rx="0.5"/><line x1="741" y1="58.5" x2="741" y2="60"/><line x1="745" y1="58.5" x2="745" y2="60"/><line x1="749" y1="58.5" x2="749" y2="60"/></g><line x1="766.5" y1="53.5" x2="766.5" y2="70" stroke="#8a8a8e" stroke-width="1.2"/><g fill="none" stroke="#525257" stroke-width="1"><path d="M778.5,57 H785 V69.5 H778.5 Z"/><path d="M785,62 H792 V69.5 H785"/><path d="M787,53.5 L791.5,51 L796,55.5 L791.5,60 L787,57.5 Z"/></g></svg>
</body></html>
